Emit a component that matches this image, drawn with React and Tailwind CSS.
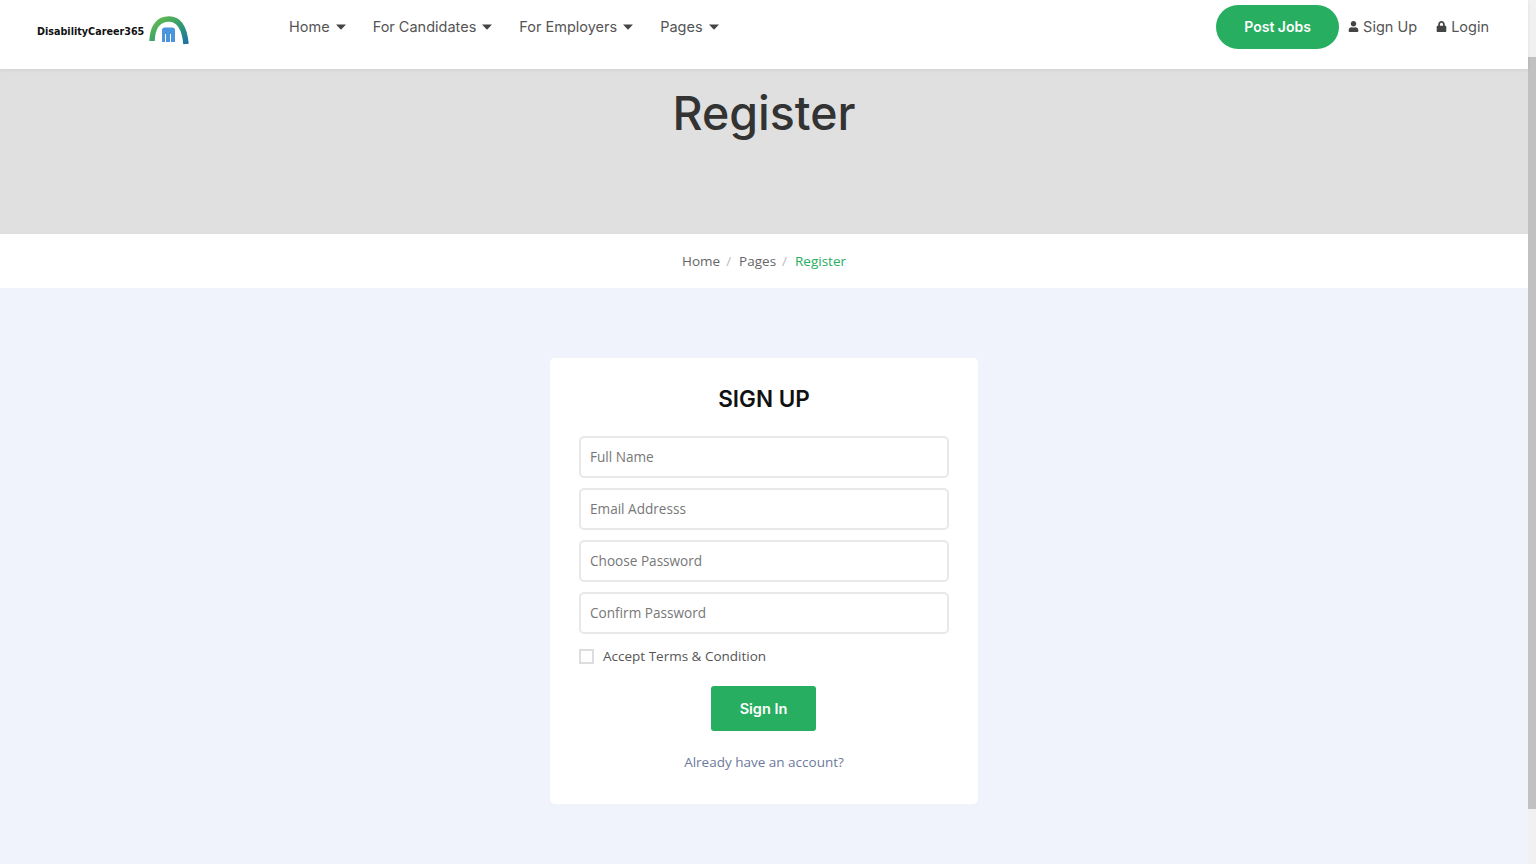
import React from "react";
import { FaLock, FaUser } from "react-icons/fa";

const navItems = ["Home", "For Candidates", "For Employers", "Pages"];
const fields = ["Full Name", "Email Addresss", "Choose Password", "Confirm Password"];

function Caret() {
  return (
    <svg width="10" height="6" viewBox="0 0 10 6" className="ml-[6px]">
      <path d="M0 0.5h10L5 5.8z" fill="#444" />
    </svg>
  );
}

function Logo() {
  return (
    <div className="flex items-center gap-[5px]">
      <span className="w-[107px] text-[10.700px] font-bold text-[#111] font-['DejaVu_Sans',sans-serif] [font-stretch:condensed] whitespace-nowrap mt-[4px]">
        DisabilityCareer365
      </span>
      <svg width="40" height="30" viewBox="0 0 40 30">
        <defs>
          <linearGradient id="arc" x1="0" x2="1" y1="0" y2="1">
            <stop offset="0" stopColor="#6cc04a" />
            <stop offset="0.55" stopColor="#2e9a72" />
            <stop offset="1" stopColor="#1f6fa5" />
          </linearGradient>
        </defs>
        <path d="M3 25C3.500 10 10 3 20 3s15.500 9 17 25" fill="none" stroke="url(#arc)" strokeWidth="5.500" />
        <path d="M13 26V14c0-1.500 1-2.500 3-2.500h7c2 0 3 1 3 2.500v12h-4v-8h-1v8h-4v-8h-1v8z" fill="#4c94dc" />
      </svg>
    </div>
  );
}

export default function App() {
  return (
    <div className="h-[864px] overflow-hidden flex bg-[#f0f3fb] font-['Open_Sans',sans-serif]">
      <div className="flex-1 min-w-0">
        <header className="relative z-10 h-[69px] bg-white flex items-center shadow-[0_1px_4px_rgba(0,0,0,0.08)] font-['Inter',sans-serif]">
          <div className="w-[289px] pl-[37px] pb-[8px]">
            <Logo />
          </div>
          <nav className="flex items-center gap-[27px] text-[14.500px] text-[#555] pb-[16px]">
            {navItems.map((item) => (
              <a key={item} className="flex items-center">
                {item}
                <Caret />
              </a>
            ))}
          </nav>
          <div className="ml-auto flex items-center pr-[39px] pb-[16px] text-[14.500px] text-[#555]">
            <button className="w-[123px] h-[44px] rounded-full bg-[#27ae60] text-white font-semibold text-[14px]">
              Post Jobs
            </button>
            <a className="flex items-center ml-[9px]">
              <FaUser size={11} color="#444" className="mr-[4px]" />
              Sign Up
            </a>
            <a className="flex items-center ml-[19px]">
              <FaLock size={11} color="#444" className="mr-[4px]" />
              Login
            </a>
          </div>
        </header>

        <section className="h-[165px] bg-[#e0e0e0] text-center pt-[15px]">
          <h1 className="text-[46.500px] leading-[58px] font-medium text-[#333] font-['Inter',sans-serif]">
            Register
          </h1>
        </section>

        <div className="h-[54px] bg-white flex items-center justify-center text-[13.500px] text-[#666]">
          <span>Home</span>
          <span className="text-[#bbb] ml-[6px] mr-[8px]">/</span>
          <span>Pages</span>
          <span className="text-[#bbb] ml-[6px] mr-[8px]">/</span>
          <span className="text-[#27ae60]">Register</span>
        </div>

        <main className="flex justify-center pt-[70px]">
          <div className="w-[428px] h-[446px] bg-white rounded-[5px] px-[29px] pt-[24px]">
            <h2 className="text-center text-[22.500px] leading-[34px] font-semibold text-[#111] font-['Inter',sans-serif]">
              SIGN UP
            </h2>
            <form className="mt-[20px] flex flex-col gap-[10px]">
              {fields.map((field) => (
                <input
                  key={field}
                  placeholder={field}
                  className="h-[42px] w-full rounded-[5px] border-2 border-[#e8e8e8] bg-white px-[9px] pb-[2px] text-[13.600px] text-[#666] placeholder:text-[#777] outline-none"
                />
              ))}
            </form>
            <label className="mt-[12px] flex items-center text-[13.500px] text-[#555] leading-[20px]">
              <span className="w-[15px] h-[15px] border-2 border-[#ddd] mr-[9px]" />
              Accept Terms &amp; Condition
            </label>
            <div className="mt-[20px] flex justify-center pr-[2px]">
              <button className="w-[105px] h-[45px] rounded-[3px] bg-[#27ae60] text-white font-semibold text-[14.500px] font-['Inter',sans-serif] pl-[1px]">
                Sign In
              </button>
            </div>
            <p className="mt-[21px] text-center text-[13.500px] leading-[20px] text-[#6d7a9c]">Already have an account?</p>
          </div>
        </main>
      </div>

      {/* scrollbar */}
      <div className="w-[8px] bg-[#f1f1f1] flex flex-col pt-[57px]">
        <div className="h-[752px] bg-[#c1c1c1]" />
      </div>
    </div>
  );
}
